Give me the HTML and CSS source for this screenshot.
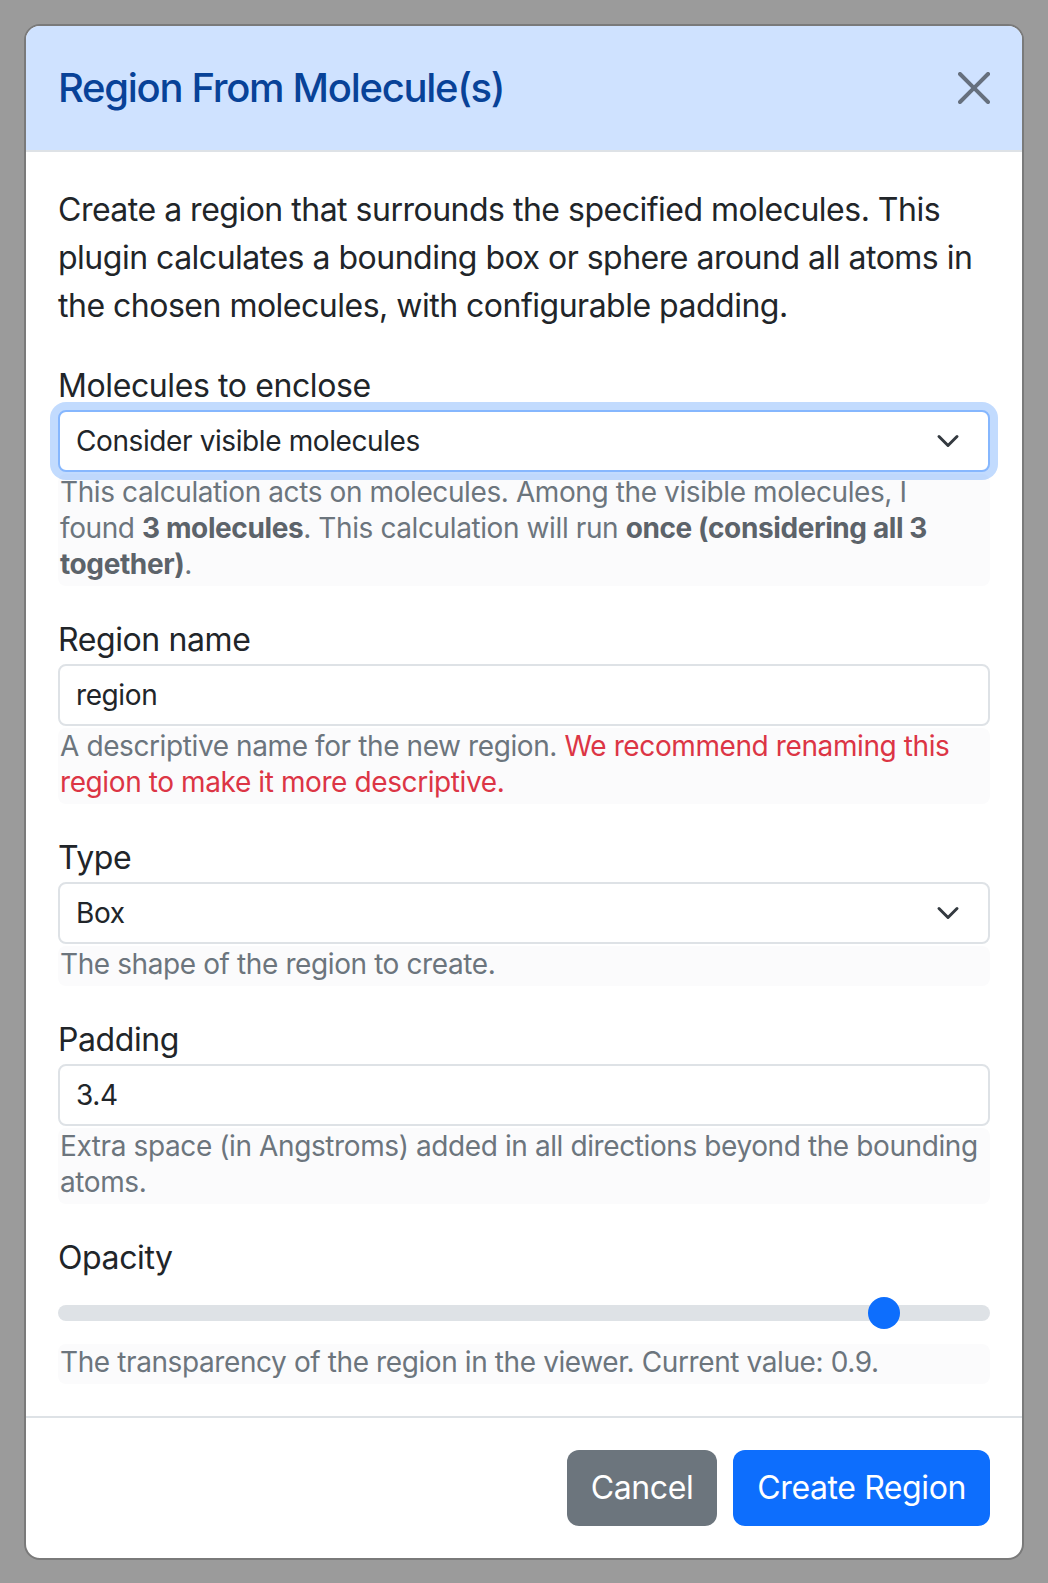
FILE: index.html
```html
<!DOCTYPE html>
<html>
<head>
    <title>Region From Molecule(s)</title>
    <link rel="stylesheet" href="styles.css">
</head>
<body>
    <div class="modal-dialog">
        <div class="modal-content">
            <div class="modal-header">
                <h5 class="modal-title">Region From Molecule(s)</h5>
                <button type="button" class="btn-close" aria-label="Close">
                    <svg viewBox="0 0 16 16" width="32" height="32">
                        <path d="M.293.293a1 1 0 0 1 1.414 0L8 6.586 14.293.293a1 1 0 1 1 1.414 1.414L9.414 8l6.293 6.293a1 1 0 0 1-1.414 1.414L8 9.414l-6.293 6.293a1 1 0 0 1-1.414-1.414L6.586 8 .293 1.707a1 1 0 0 1 0-1.414z"/>
                    </svg>
                </button>
            </div>

            <div class="modal-body">
                <p class="intro">Create a region that surrounds the specified molecules. This plugin calculates a bounding box or sphere around all atoms in the chosen molecules, with configurable padding.</p>

                <div class="form-group">
                    <label for="molecules">Molecules to enclose</label>
                    <div class="select-wrap">
                        <select id="molecules" class="form-select focused">
                            <option>Consider visible molecules</option>
                            <option>Consider selected molecules</option>
                            <option>Consider all molecules</option>
                        </select>
                        <svg class="chevron" viewBox="0 0 16 16" width="24" height="24"><path d="M2 5l6 6 6-6" fill="none" stroke="#343a40" stroke-width="2" stroke-linecap="round" stroke-linejoin="round"/></svg>
                    </div>
                    <div class="form-text">This calculation acts on molecules. Among the visible molecules, I found <b>3 molecules</b>. This calculation will run <b>once (considering all 3 together)</b>.</div>
                </div>

                <div class="form-group">
                    <label for="regionName">Region name</label>
                    <input type="text" id="regionName" class="form-control" value="region">
                    <div class="form-text">A descriptive name for the new region. <span class="warn">We recommend renaming this region to make it more descriptive.</span></div>
                </div>

                <div class="form-group">
                    <label for="regionType">Type</label>
                    <div class="select-wrap">
                        <select id="regionType" class="form-select">
                            <option>Box</option>
                            <option>Sphere</option>
                        </select>
                        <svg class="chevron" viewBox="0 0 16 16" width="24" height="24"><path d="M2 5l6 6 6-6" fill="none" stroke="#343a40" stroke-width="2" stroke-linecap="round" stroke-linejoin="round"/></svg>
                    </div>
                    <div class="form-text">The shape of the region to create.</div>
                </div>

                <div class="form-group">
                    <label for="padding">Padding</label>
                    <input type="text" id="padding" class="form-control" value="3.4">
                    <div class="form-text">Extra space (in Angstroms) added in all directions beyond the bounding atoms.</div>
                </div>

                <div class="form-group last">
                    <label for="opacity">Opacity</label>
                    <input type="range" id="opacity" class="form-range" min="0" max="1" step="0.1" value="0.9">
                    <div class="form-text">The transparency of the region in the viewer. Current value: 0.9.</div>
                </div>
            </div>

            <div class="modal-footer">
                <button type="button" class="btn btn-secondary">Cancel</button>
                <button type="button" class="btn btn-primary">Create Region</button>
            </div>
        </div>
    </div>
</body>
</html>
```

FILE: styles.css
```css
body {
    margin: 0;
    background-color: #9b9b9b;
    font-family: Inter, "Liberation Sans", sans-serif;
    letter-spacing: -0.4px;
    color: #212529;
}
.modal-dialog {
    width: 1000px;
    margin: 24px auto;
}
.modal-content {
    background-color: white;
    border: 2px solid #7a7a7a;
    border-radius: 16px;
    overflow: hidden;
}
.modal-header {
    display: flex;
    align-items: center;
    justify-content: space-between;
    padding: 32px;
    background-color: #cfe2ff;
    border-bottom: 2px solid #dee2e6;
}
.modal-title {
    margin: 0;
    font-size: 40px;
    line-height: 60px;
    font-weight: 500;
    letter-spacing: -1.3px;
    color: #084298;
}
.btn-close {
    display: flex;
    padding: 0;
    border: none;
    background: none;
    cursor: pointer;
    opacity: 0.5;
}
.modal-body {
    padding: 34px 32px 32px;
}
.intro {
    margin: 0 0 32px;
    font-size: 32px;
    line-height: 48px;
    letter-spacing: -0.5px;
}
.form-group {
    display: flex;
    flex-direction: column;
    margin-bottom: 30px;
}
.form-group.last {
    margin-bottom: 0;
}
label {
    font-size: 32px;
    line-height: 48px;
}
.select-wrap {
    position: relative;
}
.form-select, .form-control {
    display: block;
    width: 100%;
    box-sizing: border-box;
    height: 62px;
    padding: 0 16px;
    font-family: inherit;
    font-size: 28px;
    letter-spacing: -0.4px;
    color: #212529;
    background-color: white;
    border: 2px solid #dee2e6;
    border-radius: 8px;
    outline: none;
}
.form-select {
    appearance: none;
    -webkit-appearance: none;
}
.form-select.focused {
    border-color: #86b7fe;
    box-shadow: 0 0 0 8px rgba(13, 110, 253, 0.25);
}
.chevron {
    position: absolute;
    right: 30px;
    top: 19px;
    pointer-events: none;
}
.form-text {
    margin-top: 2px;
    padding: 0 2px 4px;
    font-size: 28px;
    line-height: 36px;
    color: #6c757d;
    background-color: #fbfbfc;
    border-radius: 8px;
}
.form-text b {
    color: #5c636a;
}
.warn {
    color: #dc3545;
}
.form-range {
    -webkit-appearance: none;
    appearance: none;
    width: 100%;
    height: 48px;
    margin: 7px 0 5px;
    padding: 0;
    background: transparent;
}
.form-range::-webkit-slider-runnable-track {
    height: 16px;
    background-color: #dee2e6;
    border-radius: 16px;
}
.form-range::-webkit-slider-thumb {
    -webkit-appearance: none;
    width: 32px;
    height: 32px;
    margin-top: -8px;
    border: none;
    border-radius: 50%;
    background-color: #0d6efd;
}
.modal-footer {
    display: flex;
    justify-content: flex-end;
    gap: 16px;
    padding: 32px;
    border-top: 2px solid #dee2e6;
}
.btn {
    padding: 14px 24px;
    font-family: inherit;
    font-size: 32px;
    line-height: 48px;
    letter-spacing: -0.4px;
    color: white;
    border: none;
    border-radius: 12px;
    cursor: pointer;
}
.btn-secondary {
    background-color: #6c757d;
}
.btn-primary {
    background-color: #0d6efd;
}
```
